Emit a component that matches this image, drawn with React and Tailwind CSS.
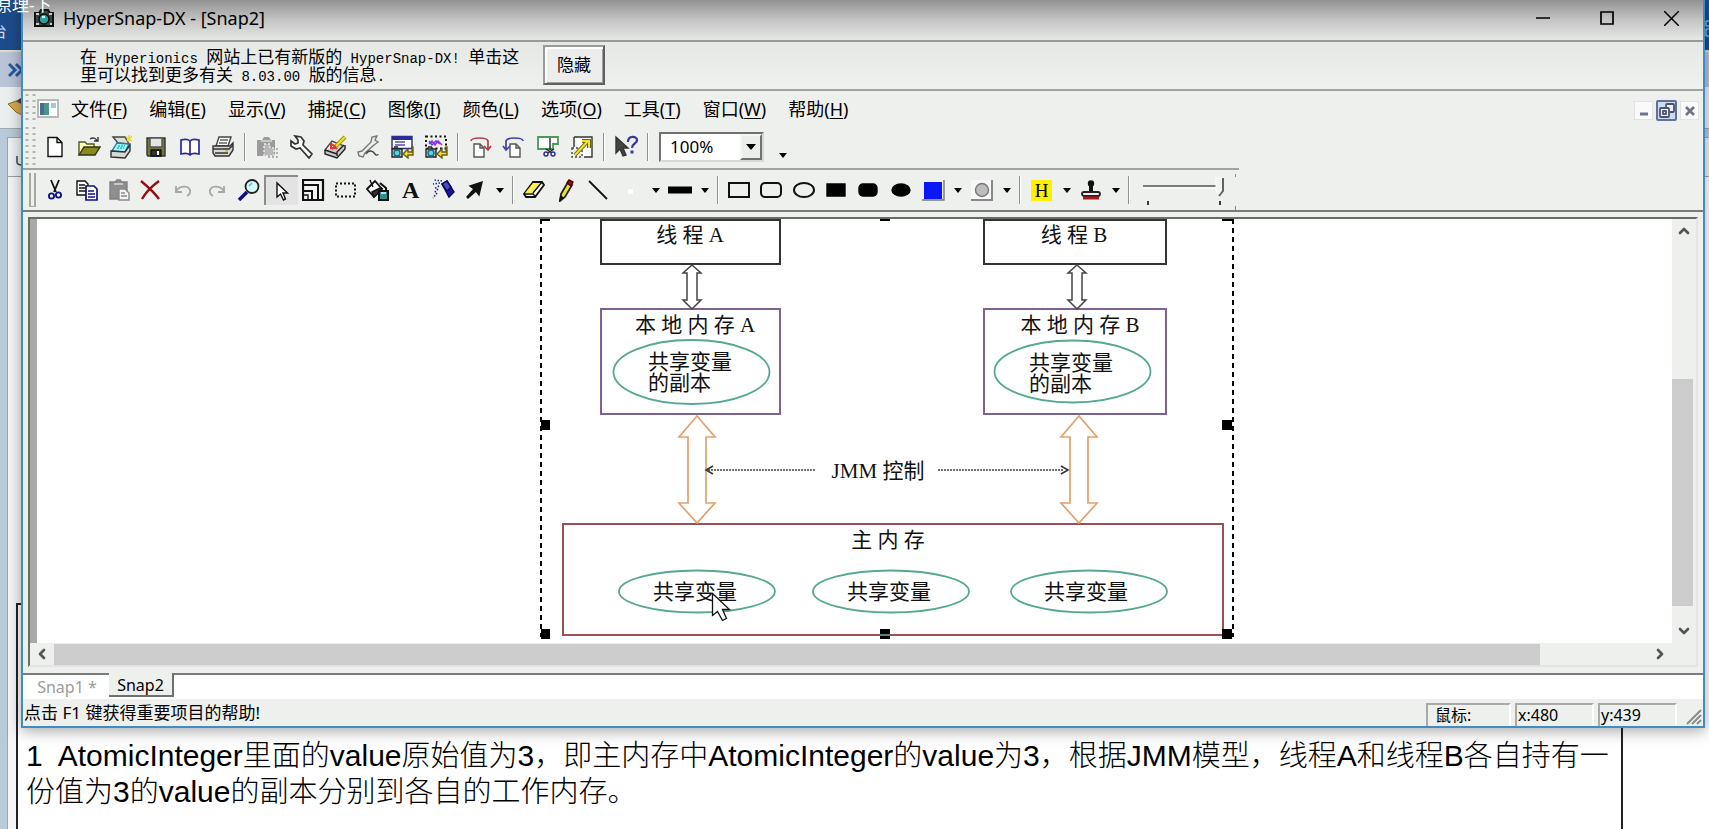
import React from "react";
import { ChevronUp, ChevronDown, ChevronLeft, ChevronRight } from "lucide-react";

const UI = "font-['Noto_Sans','Noto_Sans_CJK_SC',sans-serif]";

function Icon({ children, size = 24 }) {
  return (
    <svg width={size} height={size} viewBox="0 0 24 24" fill="none" stroke="#111" strokeWidth="1.4" aria-hidden="true" className="shrink-0">
      {children}
    </svg>
  );
}

const icons = {
  new: (
    <path d="M5 2.500h9l5 5v14h-14zM14 2.500v5h5" fill="#fff" />
  ),
  open: (
    <>
      <path d="M2 20v-13h6l2 2h7v3" fill="#ffffb0" stroke="#555522" />
      <path d="M2 20l5-8h16l-5 8z" fill="#8a8a20" stroke="#333311" />
      <path d="M13 4c3-2 6-1 7 2M21 2v4h-4" stroke="#333" />
    </>
  ),
  scan: (
    <>
      <path d="M3 2h12l4 7-11-1z" fill="#ddd" stroke="#444" />
      <path d="M7 8l12 1-4 8-13-1z" fill="#9ff8f8" stroke="#2a7a9a" />
      <path d="M1 16l14 1 5-7v6l-5 7-14-1z" fill="#d8d8d8" stroke="#333" />
      <path d="M8 11h7M7 13h7" stroke="#2ab0d0" strokeDasharray="2 1" />
      <path d="M19 0v7M16 2l6 4M22 1l-5 5" stroke="#e8d820" />
    </>
  ),
  save: (
    <>
      <path d="M3 3h18v18h-17l-1-1z" fill="#76783a" stroke="#333" />
      <path d="M6 3h12v9h-12z" fill="#e4e4e0" stroke="#555" />
      <path d="M7 15h10v6h-10z" fill="#333" />
      <path d="M14 16v4" stroke="#fff" strokeWidth="2" />
    </>
  ),
  book: (
    <path d="M12 6c-2-2-5-2-9-1v14c4-1 7-1 9 1 2-2 5-2 9-1V5c-4-1-7-1-9 1v14" fill="#fff" stroke="#2b2b9a" strokeWidth="1.700" />
  ),
  print: (
    <>
      <path d="M8 2h12l-3 9H5z" fill="#fff" stroke="#444" />
      <path d="M9 5h8M8 8h8" stroke="#666" />
      <path d="M2 11h17l3-3v7l-4 6H4l-2-3z" fill="#d8d8d4" stroke="#333" />
      <path d="M2 14h16l4-4M4 18h13" stroke="#333" />
      <path d="M14 16h3" stroke="#d8c820" strokeWidth="2" />
    </>
  ),
  pasteSpecial: (
    <>
      <path d="M2 5h5l2-3h5l2 3h4v16H2z" fill="#9b9b9b" stroke="none" />
      <path d="M9 9h6v4h4v8H9z" fill="#b8b8b8" stroke="#eee" strokeDasharray="2 2" />
      <path d="M6 6h11" stroke="#ddd" />
      <path d="M22 13v9h-9" stroke="#999" strokeDasharray="2 2" />
    </>
  ),
  wrench: (
    <path d="M2 6l4 3 3-1V5L6 1l6 1 3 4-1 4 9 9-3 4-9-10-4 1-5-3z" fill="#fff" stroke="#333" strokeWidth="1.700" />
  ),
  stampPad: (
    <>
      <path d="M2 15l7-9 12 5-7 10z" fill="#f2f2f2" stroke="#444" />
      <path d="M2 15v4l12 4 8-9v-4" fill="#ccc" stroke="#222" />
      <path d="M14 21v-4l7-7M2 15l12 4" stroke="#222" />
      <path d="M9 9l5 5M15 9l-6 5M8 8v5h5" stroke="#e33" strokeWidth="2" />
      <path d="M22 2l-9 9" stroke="#a89010" strokeWidth="4" />
      <path d="M22 2l-9 9" stroke="#f0e020" strokeWidth="2" />
    </>
  ),
  spanner: (
    <>
      <path d="M3 21l-1-4 4-1 9-9 1-5 5-1-2 4 3 2-4 3-9 8-2 4z" fill="#eee" stroke="#777" />
      <path d="M10 19c3-5 7-3 9 0 1 2 3 1 3 0" stroke="#444" />
    </>
  ),
  capWindow: (
    <>
      <path d="M2 1.500h20v12H2z" fill="#fff" stroke="#2b2b8a" />
      <path d="M2 3h20" stroke="#2b2b9a" strokeWidth="4" />
      <path d="M5 7h10M5 10h10" stroke="#5050b0" />
      <path d="M2 14h10v8H2zM4 12h4" fill="#ccc" stroke="#222" />
      <circle cx="7" cy="18" r="3" fill="#4fd8e8" stroke="#1a6a7a" />
      <path d="M22 12v5h-4v-3l-5 5 5 4v-3h5v-8z" fill="#f0e030" stroke="#6a6010" />
    </>
  ),
  capRegion: (
    <>
      <path d="M2 1.500h20v12H2z" stroke="#111" strokeWidth="2" strokeDasharray="2 2.500" />
      <path d="M5 9l3-3 3 4 3-4 4 4" stroke="#c020d0" strokeWidth="1.500" />
      <path d="M5 6l3 4 4-4 4 3" stroke="#4040ff" />
      <path d="M2 14h10v8H2zM4 12h4" fill="#ccc" stroke="#222" />
      <circle cx="7" cy="18" r="3" fill="#4fd8e8" stroke="#1a6a7a" />
      <path d="M22 12v5h-4v-3l-5 5 5 4v-3h5v-8z" fill="#f0e030" stroke="#6a6010" />
    </>
  ),
  rotRight: (
    <>
      <path d="M6 9h6l4 4v9H6zM12 9v4h4" fill="#fff" stroke="#555" />
      <path d="M3 6c0-4 16-4 17 0v8M16 11l4 4 3-4" stroke="#b04050" strokeWidth="1.700" />
    </>
  ),
  rotLeft: (
    <>
      <path d="M8 9h6l4 4v9H8zM14 9v4h4" fill="#fff" stroke="#555" />
      <path d="M21 6c0-4-16-4-17 0v8M1 11l3 4 4-4" stroke="#4040a8" strokeWidth="1.700" />
    </>
  ),
  crop: (
    <>
      <path d="M2 2h20v7h-5v5H2z" fill="#fff" stroke="#4a9a5a" strokeWidth="1.800" />
      <path d="M14 3v12M10 14l6 4M18 14l-6 4" stroke="#222" />
      <circle cx="10" cy="19" r="2" stroke="#2b2ba0" />
      <circle cx="17" cy="19" r="2" stroke="#2b2ba0" />
    </>
  ),
  resize: (
    <>
      <path d="M4 2h18v20h-8" fill="#fff" stroke="#333" />
      <path d="M4 2v10" stroke="#333" />
      <path d="M2 13h10v9H2z" stroke="#444" strokeDasharray="2 2" />
      <path d="M5 20L17 7M12 6h7v7" stroke="#706410" strokeWidth="4" />
      <path d="M5 20L18 6M12 6h7v7" stroke="#f0e030" strokeWidth="2" />
    </>
  ),
  help: (
    <>
      <path d="M2 2v16l4-4 3 7 3-1-3-7h5z" fill="#444" stroke="#333" />
      <path d="M14 7c0-7 9-6 9-2 0 4-5 3-5 8" stroke="#3838a0" strokeWidth="2.200" />
      <path d="M16.500 17h3" stroke="#3838a0" strokeWidth="3" />
    </>
  ),
  cut: (
    <>
      <path d="M8 2l5 12M16 2l-5 12" stroke="#111" strokeWidth="1.800" />
      <circle cx="8.500" cy="18" r="2.600" stroke="#101080" strokeWidth="1.800" />
      <circle cx="15.500" cy="17" r="2.600" stroke="#101080" strokeWidth="1.800" />
    </>
  ),
  copy: (
    <>
      <path d="M2 3h8l3 3v11H2zM4 7h6M4 10h7M4 13h7" fill="#fff" />
      <path d="M11 8h8l3 3v11H11zM13 13h6M13 16h7M13 19h7" fill="#fff" stroke="#101080" strokeWidth="1.700" />
    </>
  ),
  paste: (
    <>
      <path d="M3 4h5l2-2h3l2 2h5v17H3z" fill="#8e8e8e" stroke="#808080" />
      <path d="M7 6h9" stroke="#ddd" />
      <path d="M12 11h6l4 4v7H12zM14 15h4M14 18h6" fill="#f4f4f4" stroke="#888" />
    </>
  ),
  remove: (
    <path d="M2 3c6 5 13 11 18 18M20 3C13 8 7 14 3 21" stroke="#941010" strokeWidth="2.400" />
  ),
  undo: (
    <path d="M4 8v6h6M4 13c4-6 15-6 14 1 0 2-1 3-3 4" stroke="#a6a6a6" strokeWidth="1.800" />
  ),
  redo: (
    <path d="M20 8v6h-6M20 13c-4-6-15-6-14 1 0 2 1 3 3 4" stroke="#a6a6a6" strokeWidth="1.800" />
  ),
  zoom: (
    <>
      <path d="M11 14l-8 8" stroke="#101080" strokeWidth="3.500" />
      <circle cx="16" cy="8.500" r="6.500" fill="#d4fafa" stroke="#222" strokeWidth="1.800" />
      <path d="M13 8l3-3" stroke="#40c0d0" />
    </>
  ),
  pointer: (
    <path d="M7 4v14l3.500-3 3 6 2-1-2.500-6h4.500z" fill="#fff" stroke="#111" />
  ),
  scale: (
    <>
      <path d="M1 2h20v20H1z" fill="#f4f4f4" strokeWidth="2.200" />
      <path d="M1 7h15v15M1 13h9v9" strokeWidth="2" />
      <path d="M1 17h5v5" />
    </>
  ),
  marquee: (
    <path d="M2 5.500h19v13H2z" strokeWidth="2" strokeDasharray="2 2" />
  ),
  bucket: (
    <>
      <path d="M1 11l8-8 7 8-8 8z" fill="#fff" strokeWidth="1.800" />
      <path d="M7 9L4 2M6 14l8-4 2 1-8 8z" fill="#333" />
      <path d="M13 13h9v9h-9z" fill="#2a9090" stroke="#111" strokeWidth="2" />
      <path d="M14 5l6 5v4" strokeWidth="2" />
      <path d="M15 15h5" stroke="#fff" />
    </>
  ),
  spray: (
    <>
      <path d="M11 6l5-3 7 11-5 5z" fill="#1818a8" stroke="#080850" />
      <path d="M11 6l5 7 4-4-4-6z" fill="#4a4ad0" stroke="#080850" />
      <path d="M11 3L3 2M9 5L2 6M8 8l-5 3M7 11l-4 4M6 15l-4 5" stroke="#2828a0" strokeWidth="1.600" strokeDasharray="1.500 1.500" />
    </>
  ),
  arrow: (
    <path d="M19 4l-3 13-3-4-8 7-1-1 7-8-4-3z" fill="#111" />
  ),
  eraser: (
    <>
      <path d="M2 16L11 4h9l2 3-9 12H4z" fill="#fff" strokeWidth="1.800" />
      <path d="M3 15L11 5h8l-8 10z" fill="#f8ee50" stroke="none" />
      <path d="M2 16h9l3 3M11 15L20 4" />
    </>
  ),
  pencil: (
    <>
      <path d="M7 16L14 4l4 3-7 12-5 4z" fill="#f0e030" stroke="#222" strokeWidth="1.800" />
      <path d="M13 5l2-3 4 2-2 4z" fill="#901818" stroke="#500" />
      <path d="M6 22l1-4 2 2z" fill="#111" />
    </>
  ),
  line: <path d="M2 3l18 18" strokeWidth="1.800" />,
  dot: <rect x="9" y="11" width="5" height="5" rx="1" fill="#fff" stroke="none" />,
  thick: <path d="M-1 12h26" stroke="#000" strokeWidth="7" />,
  rect: <path d="M2 5h20v14H2z" strokeWidth="2" />,
  rrect: <rect x="2" y="5" width="20" height="14" rx="4" strokeWidth="2" />,
  ellipse: <ellipse cx="12" cy="12" rx="10" ry="7" strokeWidth="2" />,
  frect: <path d="M3 6h18v12H3z" fill="#000" stroke="#000" />,
  frrect: <rect x="3" y="6" width="18" height="12" rx="4" fill="#000" stroke="#000" />,
  fellipse: <ellipse cx="12" cy="12" rx="9" ry="6" fill="#000" stroke="#000" />,
  blue: (
    <>
      <path d="M1 2h22v20H1z" fill="#f0f0f0" stroke="none" />
      <path d="M23 2v20H1" stroke="#777" />
      <path d="M3 4h18v17H3z" fill="#0a18f8" stroke="none" />
    </>
  ),
  gray: (
    <>
      <path d="M1 2h21v20H1z" fill="#f8f8f8" stroke="none" />
      <path d="M22 2v20H1" stroke="#888" strokeWidth="2" />
      <circle cx="12" cy="12" r="6.500" fill="#bdbdbd" stroke="#777" />
    </>
  ),
  rubber: (
    <>
      <circle cx="12" cy="5.500" r="2.500" fill="#111" />
      <path d="M12 6v9" strokeWidth="4" />
      <rect x="3" y="14" width="18" height="4" rx="2" fill="#eee" stroke="#222" strokeWidth="1.800" />
      <path d="M4 20h16" stroke="#b01818" strokeWidth="3" />
    </>
  ),
};

function Tool({ name, label, active }) {
  return (
    <button
      aria-label={label}
      className={
        "flex flex-1 basis-0 items-center justify-center " +
        (active ? "border-t-2 border-l-2 border-[#8c8c8c] bg-[#e2e3e2]" : "")
      }
    >
      {name === "letter" ? (
        <span className="font-['Liberation_Serif',serif] text-[24px] leading-[30px] font-bold text-[#111]">A</span>
      ) : (
        <Icon>{icons[name]}</Icon>
      )}
    </button>
  );
}

const Group = ({ width, items }) => (
  <div className={"flex h-[30px] shrink-0 " + width}>
    {items.map(([name, label, active]) => (
      <Tool key={name} name={name} label={label} active={active} />
    ))}
  </div>
);

const Sep = () => <div className="mx-1 h-7 w-[2px] shrink-0 border-l border-[#8f918f] bg-white" />;

const Drop = ({ label }) => (
  <button aria-label={label} className="flex h-[30px] w-[17px] shrink-0 items-center justify-center">
    <svg width="8" height="5" viewBox="0 0 8 5" aria-hidden="true">
      <path d="M0 0h8L4 5z" fill="#000" />
    </svg>
  </button>
);

const menus = [
  ["文件", "F"], ["编辑", "E"], ["显示", "V"], ["捕捉", "C"], ["图像", "I"],
  ["颜色", "L"], ["选项", "O"], ["工具", "T"], ["窗口", "W"], ["帮助", "H"],
];

function TitleBar() {
  return (
    <header className="flex h-[42px] items-center border-b-2 border-[#989a98] bg-linear-to-b from-[#929292] via-[#c4c5c4] to-[#e6e8e6] pb-1 pl-[10px]">
      <svg width="22" height="18" viewBox="0 0 22 18" aria-hidden="true">
        <path d="M2 4h4l2-3h7l2 3h3v13H2z" fill="#3c4444" stroke="#111" strokeWidth="2" />
        <path d="M3 5h3M16 5h3M3 15h3M17 15h2" stroke="#ccc" strokeWidth="2" />
        <circle cx="11" cy="10" r="5" fill="#2aa0a0" stroke="#0a0a0a" strokeWidth="1.500" />
        <path d="M9 8h3" stroke="#bff" strokeWidth="2" />
      </svg>
      <h1 className="ml-2 flex-1 text-[18px]">HyperSnap-DX - [Snap2]</h1>
      <div className="flex">
        <button aria-label="最小化" className="flex h-8 w-16 items-center justify-center">
          <svg width="14" height="14" viewBox="0 0 14 14"><path d="M0 7h14" stroke="#000" strokeWidth="1.500" /></svg>
        </button>
        <button aria-label="最大化" className="flex h-8 w-16 items-center justify-center">
          <svg width="14" height="14" viewBox="0 0 14 14"><path d="M1 1h12v12H1z" fill="none" stroke="#000" strokeWidth="1.700" /></svg>
        </button>
        <button aria-label="关闭" className="flex h-8 w-16 items-center justify-center">
          <svg width="15" height="15" viewBox="0 0 15 15"><path d="M0 0l15 15M15 0L0 15" stroke="#000" strokeWidth="1.500" /></svg>
        </button>
      </div>
    </header>
  );
}

const Mono = ({ children }) => (
  <span className="font-['Liberation_Mono','Noto_Sans_CJK_SC',monospace] text-[14px] leading-[10px]">{children}</span>
);

function UpdateBanner() {
  return (
    <div className="flex h-[49px] items-center border-b-2 border-[#a0a2a0] bg-linear-to-b from-[#e6e8e6] to-[#eff1ef] pb-[2px] pl-[57px]">
      <p className="w-[463px] font-['Noto_Sans_CJK_SC',sans-serif] text-[17px] leading-[18px] whitespace-nowrap">
        在<Mono> Hyperionics </Mono>网站上已有新版的<Mono> HyperSnap-DX! </Mono>单击这
        <br />
        里可以找到更多有关<Mono> 8.03.00 </Mono>版的信息<Mono>.</Mono>
      </p>
      <button className="h-10 w-[62px] border-2 border-t-[#9a9a9a] border-r-[#606060] border-b-[#606060] border-l-[#9a9a9a] bg-[#ecedec] text-[17px] shadow-[inset_2px_2px_#fff,inset_-1px_-1px_#a0a0a0]">
        隐藏
      </button>
    </div>
  );
}

function Dots({ height }) {
  return (
    <svg width="11" height={height} aria-hidden="true" className="shrink-0">
      <path d={`M2 0V${height}M9 0V${height}`} stroke="#b2b4b2" strokeWidth="3" strokeDasharray="2 4" />
    </svg>
  );
}

function MenuBar() {
  return (
    <nav className="flex h-[35px] items-center pl-[2px]">
      <Dots height={30} />
      <svg width="22" height="19" viewBox="0 0 22 19" className="mr-px ml-px" aria-hidden="true">
        <path d="M1 1h20v17H1z" fill="#fff" stroke="#b8bab8" strokeWidth="2" />
        <path d="M3 4h9v12H3z" fill="#4b9590" />
        <path d="M3 4h4v12H3z" fill="#4c6a8e" />
        <path d="M14 4h5v5h-5z" fill="#a8c4d8" />
      </svg>
      <ul className="flex flex-1 text-[18px]">
        {menus.map(([text, key]) => (
          <li key={key}>
            <button className="px-[11px] leading-7 whitespace-nowrap">
              {text}(<span className="underline underline-offset-2">{key}</span>)
            </button>
          </li>
        ))}
      </ul>
      <div className="flex items-center gap-[3px] pt-1 pr-1">
        <button aria-label="最小化文档" className="flex h-[19px] w-[19px] items-center justify-center border border-[#e2e2e4] bg-[#fafafa]">
          <svg width="10" height="10"><path d="M1 8h8" stroke="#6a7488" strokeWidth="3" /></svg>
        </button>
        <button aria-label="还原文档" className="flex h-[21px] w-[21px] items-center justify-center rounded-[2px] border-2 border-[#5f7199] bg-[#cfdcef]">
          <svg width="16" height="16" fill="none" stroke="#4a556c" strokeWidth="1.800">
            <rect x="7" y="1" width="8" height="8" rx="1" fill="#eef" />
            <rect x="1" y="5" width="9" height="9" rx="1" fill="#eef" />
            <rect x="4" y="8" width="3" height="3" />
          </svg>
        </button>
        <button aria-label="关闭文档" className="flex h-[19px] w-[19px] items-center justify-center border border-[#e2e2e4] bg-[#fafafa]">
          <svg width="10" height="10"><path d="M1 1l8 8M9 1L1 9" stroke="#6a7488" strokeWidth="2.600" /></svg>
        </button>
      </div>
    </nav>
  );
}

function StandardBar() {
  return (
    <div className="flex h-[44px] w-[1216px] items-center border-b-2 border-[#a0a2a0] pl-[2px]">
      <Dots height={40} />
      <div className="w-[2px] shrink-0" />
      <Group width="w-[202px]" items={[["new", "新建"], ["open", "打开"], ["scan", "扫描"], ["save", "保存"], ["book", "目录"], ["print", "打印"]]} />
      <Sep />
      <Group width="w-[203px]" items={[["pasteSpecial", "选择性粘贴"], ["wrench", "设置"], ["stampPad", "图章"], ["spanner", "捕捉设置"], ["capWindow", "捕捉窗口"], ["capRegion", "捕捉区域"]]} />
      <Sep />
      <Group width="w-[136px]" items={[["rotRight", "右旋"], ["rotLeft", "左旋"], ["crop", "裁剪"], ["resize", "调整大小"]]} />
      <Sep />
      <Group width="w-[34px]" items={[["help", "帮助"]]} />
      <Sep />
      <div className="relative ml-[6px] flex h-[30px] w-[105px] shrink-0 items-center border-2 border-t-[#6f716f] border-r-[#d8d8d8] border-b-[#d8d8d8] border-l-[#6f716f] bg-white">
        <select aria-label="缩放" className="h-full w-full appearance-none bg-white pl-[9px] text-[17px] outline-none">
          <option>100%</option>
        </select>
        <span className="pointer-events-none absolute top-0 right-0 flex h-[26px] w-[22px] items-center justify-center border-2 border-t-[#f4f4f4] border-r-[#6f716f] border-b-[#6f716f] border-l-[#f4f4f4] bg-[#eceeec]">
          <svg width="10" height="6" viewBox="0 0 10 6" aria-hidden="true"><path d="M0 0h10L5 6z" /></svg>
        </span>
      </div>
      <div className="ml-[10px] pt-4">
        <Drop label="更多" />
      </div>
    </div>
  );
}

function DrawBar() {
  return (
    <div className="flex h-[42px] items-center border-b-2 border-[#7a7c7a]">
      <div className="ml-[6px] h-[34px] w-[7px] shrink-0 border-x-2 border-b border-[#a6a8a6]" />
      <div className="w-[3px] shrink-0" />
      <Group
        width="w-[452px]"
        items={[
          ["cut", "剪切"], ["copy", "复制"], ["paste", "粘贴"], ["remove", "删除"], ["undo", "撤消"],
          ["redo", "重做"], ["zoom", "放大镜"], ["pointer", "选择", true], ["scale", "缩放选区"],
          ["marquee", "选框"], ["bucket", "填充"], ["letter", "文本"], ["spray", "喷枪"], ["arrow", "箭头"],
        ]}
      />
      <Drop label="箭头样式" />
      <Sep />
      <Group width="w-[129px]" items={[["eraser", "橡皮"], ["pencil", "铅笔"], ["line", "直线"], ["dot", "笔尖"]]} />
      <Drop label="笔尖大小" />
      <Group width="w-[32px]" items={[["thick", "线宽"]]} />
      <Drop label="线宽选择" />
      <Sep />
      <Group width="w-[194px]" items={[["rect", "矩形"], ["rrect", "圆角矩形"], ["ellipse", "椭圆"], ["frect", "实心矩形"], ["frrect", "实心圆角矩形"], ["fellipse", "实心椭圆"]]} />
      <Group width="w-[32px]" items={[["blue", "前景色"]]} />
      <Drop label="前景色选择" />
      <Group width="w-[32px]" items={[["gray", "背景色"]]} />
      <Drop label="背景色选择" />
      <Sep />
      <button aria-label="高亮" className="mx-[6px] h-[21px] w-[21px] bg-[#fff000] font-['Liberation_Serif',serif] text-[19px] leading-[21px]">
        H
      </button>
      <Drop label="高亮颜色" />
      <Group width="w-[32px]" items={[["rubber", "印章"]]} />
      <Drop label="印章选择" />
      <Sep />
      <div className="relative ml-[9px] h-[34px] w-[84px]">
        <input type="range" defaultValue={100} aria-label="不透明度" className="absolute inset-0 h-full w-full opacity-0" />
        <svg width="84" height="34" viewBox="0 0 84 34" className="pointer-events-none" aria-hidden="true">
          <path d="M0 13h76" stroke="#7a7c7a" strokeWidth="2" />
          <path d="M0 15h76" stroke="#fff" />
          <path d="M73 5h7v13l-3 4-4-4z" fill="#f2f4f2" stroke="#fff" />
          <path d="M80 5v13l-4 5" fill="none" stroke="#606260" strokeWidth="2" />
          <path d="M5 28v4M77 28v4" stroke="#000" strokeWidth="1.500" />
        </svg>
      </div>
      <div className="ml-2 flex flex-col justify-between self-stretch pt-1">
        <div className="h-[3px] w-px bg-[#888]" />
        <div className="h-1 w-px bg-[#888]" />
      </div>
    </div>
  );
}

const Label = ({ x, y, children, anchor = "middle" }) => (
  <text x={x} y={y} textAnchor={anchor}>{children}</text>
);

const smallArrow = (cx) =>
  `M${cx} 265l9 8h-4v27h4l-9 9-9-9h4v-27h-4z`;
const bigArrow = (cx) =>
  `M${cx} 416l18 21h-9v66h9l-18 20-18-20h9v-66h-9z`;

function Diagram() {
  return (
    <svg width="694" height="424" viewBox="540 219 694 424" className="block shrink-0" fill="none">
      <g stroke="#000" strokeWidth="2" strokeDasharray="5 4">
        <path d="M541 219V637" />
        <path d="M1233 219V637" />
      </g>
      <g stroke="#333" strokeWidth="2">
        <rect x="601" y="220" width="179" height="44" />
        <rect x="984" y="220" width="182" height="44" />
      </g>
      <g stroke="#7d6296" strokeWidth="2">
        <rect x="601" y="309" width="179" height="105" />
        <rect x="984" y="309" width="182" height="105" />
      </g>
      <rect x="563" y="524" width="660" height="111" stroke="#9c5056" strokeWidth="2" />
      <path d={smallArrow(692)} stroke="#444" strokeWidth="1.500" fill="#fff" />
      <path d={smallArrow(1077)} stroke="#444" strokeWidth="1.500" fill="#fff" />
      <path d={bigArrow(697)} stroke="#e3a06a" strokeWidth="1.700" fill="#fff" />
      <path d={bigArrow(1079)} stroke="#e3a06a" strokeWidth="1.700" fill="#fff" />
      <g stroke="#55a893" strokeWidth="1.800">
        <ellipse cx="691.5" cy="372" rx="78" ry="32" />
        <ellipse cx="1072.5" cy="371.500" rx="78" ry="31" />
        <ellipse cx="697" cy="591.500" rx="78" ry="21" />
        <ellipse cx="891" cy="591.500" rx="78" ry="21" />
        <ellipse cx="1089" cy="591.500" rx="78" ry="21" />
      </g>
      <path d="M708 470H816M938 470h126" stroke="#444" strokeWidth="1.500" strokeDasharray="2 1" />
      <path d="M713 466l-7 4 7 4M1061 466l7 4-7 4" stroke="#333" strokeWidth="1.500" />
      <g fill="#000">
        <path d="M541 219h9v2h-9zM880 219h10v2h-10zM1222 219h11v2h-11z" />
        <path d="M541 420h9v10h-9zM1222 420h10v10h-10zM541 629h9v10h-9zM1222 629h10v10h-10zM880 629h10v10h-10z" />
      </g>
      <path d="M880 635h10" stroke="#59807c" strokeWidth="2" />
      <g fill="#111" fontSize="21" fontFamily="Liberation Serif, Noto Sans CJK SC, serif">
        <Label x="690" y="242">线 程 A</Label>
        <Label x="1074" y="242">线 程 B</Label>
        <Label x="695" y="332">本 地 内 存 A</Label>
        <Label x="1080" y="332">本 地 内 存 B</Label>
        <Label x="648" y="369" anchor="start">共享变量</Label>
        <Label x="648" y="390" anchor="start">的副本</Label>
        <Label x="1029" y="370" anchor="start">共享变量</Label>
        <Label x="1029" y="391" anchor="start">的副本</Label>
        <Label x="878" y="478">JMM 控制</Label>
        <Label x="888" y="547">主 内 存</Label>
        <Label x="695" y="599">共享变量</Label>
        <Label x="889" y="599">共享变量</Label>
        <Label x="1086" y="599">共享变量</Label>
      </g>
      <path d="M712.500 593.500v22l5-4 5 9 4-2-4-9h7z" fill="#fff" stroke="#111" strokeWidth="1.300" />
    </svg>
  );
}

function Workspace() {
  return (
    <main className="px-[5px] pt-[5px] pb-[6px]">
      <div className="grid grid-cols-[1fr_24px] border-2 border-t-[#696b69] border-r-[#e4e4e4] border-b-[#e4e4e4] border-l-[#696b69]">
        <div className="flex min-w-0 overflow-hidden border-l-[7px] border-[#a8aaa8] bg-white pl-[503px]">
          <Diagram />
        </div>
        <div className="flex flex-col items-center">
          <button aria-label="向上滚动" className="flex h-6 w-full items-center justify-center">
            <ChevronUp size={16} strokeWidth={4} color="#555" />
          </button>
          <div className="flex w-full flex-1 flex-col pr-[3px]">
            <div className="flex-1" />
            <div className="h-[227px] bg-[#cbcccb]" />
          </div>
          <button aria-label="向下滚动" className="flex h-[37px] w-full items-center justify-center pt-3">
            <ChevronDown size={16} strokeWidth={4} color="#555" />
          </button>
        </div>
        <div className="flex h-[22px] items-center">
          <button aria-label="向左滚动" className="flex w-6 items-center justify-center">
            <ChevronLeft size={16} strokeWidth={4} color="#555" />
          </button>
          <div className="flex-1 pr-[108px]">
            <div className="h-[21px] bg-[#cbcccb]" />
          </div>
          <button aria-label="向右滚动" className="flex w-6 items-center justify-center">
            <ChevronRight size={16} strokeWidth={4} color="#555" />
          </button>
        </div>
        <div />
      </div>
    </main>
  );
}

function TabStrip() {
  return (
    <div className="flex h-[26px] bg-white text-[16px]">
      <button className="w-[86px] border-t-2 border-[#7a7c7a] pl-[2px] text-[#9a9c9a]">Snap1 *</button>
      <button className="mb-[2px] w-[65px] border-r-2 border-b-2 border-[#6f716f] bg-[#eef0ee]">Snap2</button>
      <div className="flex-1 border-t-2 border-[#7a7c7a]" />
    </div>
  );
}

const Pane = ({ width, children }) => (
  <div className={"h-[23px] border-t-2 border-r-2 border-l-2 border-t-[#a8aaa8] border-r-white border-l-[#a8aaa8] leading-[21px] whitespace-nowrap " + width}>
    {children}
  </div>
);

function StatusBar() {
  return (
    <footer className="flex h-[27px] items-end pl-px text-[16px]">
      <p className="flex-1 self-center text-[17px] leading-6">点击 F1 键获得重要项目的帮助!</p>
      <div className="flex gap-1">
        <Pane width="w-[85px] pl-[7px]">鼠标:</Pane>
        <Pane width="w-[79px] pl-[1px]">x:480</Pane>
        <Pane width="w-[79px] pl-[1px]">y:439</Pane>
      </div>
      <svg width="26" height="20" viewBox="0 0 26 20" aria-hidden="true">
        <path d="M10 18L24 4M15 18l9-9M20 18l4-4" stroke="#8a8c8a" strokeWidth="2" />
      </svg>
    </footer>
  );
}

function Backdrop() {
  return (
    <div className="absolute inset-0 flex flex-col" aria-hidden="true">
      <div className="h-[50px] bg-[#1d4c8c]" />
      <div className="h-[37px] border-t-2 border-[#e4dcc0] bg-[#b9c4d8]" />
      <div className="h-[42px] border-b border-[#a0a8b0] bg-[#eceff0]" />
      <div className="flex flex-1 bg-[#b9cada] pt-2">
        <div className="w-[7px]" />
        <div className="flex flex-1 flex-col border-t border-l border-[#a0a4a8] bg-[#eef2f4]">
          <div className="h-[39px] border-b border-[#9aa0a8]" />
          <div className="flex-1 bg-linear-to-r from-[#f4f6f8] to-white" />
        </div>
      </div>
    </div>
  );
}

const Latin = ({ children }) => <span className="text-[30px]">{children}</span>;

function DocumentText() {
  return (
    <p className="relative pt-[10px] pr-20 pl-[26px] font-['Liberation_Sans','Noto_Sans_CJK_SC',sans-serif] text-[29px] leading-9 font-light whitespace-pre">
      <Latin>{"1  AtomicInteger"}</Latin>里面的<Latin>value</Latin>原始值为<Latin>3</Latin>，即主内存中<Latin>AtomicInteger</Latin>的<Latin>value</Latin>为<Latin>3</Latin>，根据<Latin>JMM</Latin>模型，线程<Latin>A</Latin>和线程<Latin>B</Latin>各自持有一
      <br />
      份值为<Latin>3</Latin>的<Latin>value</Latin>的副本分别到各自的工作内存。
    </p>
  );
}

export default function App() {
  return (
    <div className={"relative flex min-h-screen flex-col overflow-hidden text-black " + UI}>
      <Backdrop />
      <div className="absolute top-[603px] bottom-0 left-4 right-[86px] border-2 border-b-0 border-[#222] bg-white" />
      <span className="absolute top-[21px] left-[-9px] text-[16px] leading-5 text-[#c8daf0]">台</span>
      <svg className="absolute top-[62px] left-2" width="14" height="16" fill="none" stroke="#245a9e" strokeWidth="3" aria-hidden="true">
        <path d="M1 2l6 6-6 6M8 2l6 6-6 6" />
      </svg>
      <svg className="absolute top-[98px] left-2" width="14" height="18" aria-hidden="true">
        <path d="M0 6l8-3 6 3v11l-6-3z" fill="#d8a850" stroke="#8a6828" />
        <path d="M8 3l5-3h1v6z" fill="#444" />
      </svg>
      <svg className="absolute top-[155px] left-4" width="6" height="11" fill="none" stroke="#444" strokeWidth="1.500" aria-hidden="true">
        <path d="M1 1v6c0 2 2 3 5 3" />
      </svg>
      <svg className="absolute top-5 right-0" width="4" height="17" fill="none" stroke="#c8daf0" aria-hidden="true">
        <path d="M4 1H1v5h3M4 9H1v7h3" />
      </svg>
      <div className="relative mr-1 ml-[21px] border-x-2 border-b-2 border-[#3f8cc6] bg-[#eef0ee] shadow-[0_3px_14px_rgba(0,0,0,0.35)]">
        <TitleBar />
        <UpdateBanner />
        <MenuBar />
        <StandardBar />
        <DrawBar />
        <Workspace />
        <TabStrip />
        <StatusBar />
      </div>
      <DocumentText />
      <span className="absolute -top-[6px] left-[-5px] text-[17px] leading-[22px] text-white">原理-下</span>
    </div>
  );
}
